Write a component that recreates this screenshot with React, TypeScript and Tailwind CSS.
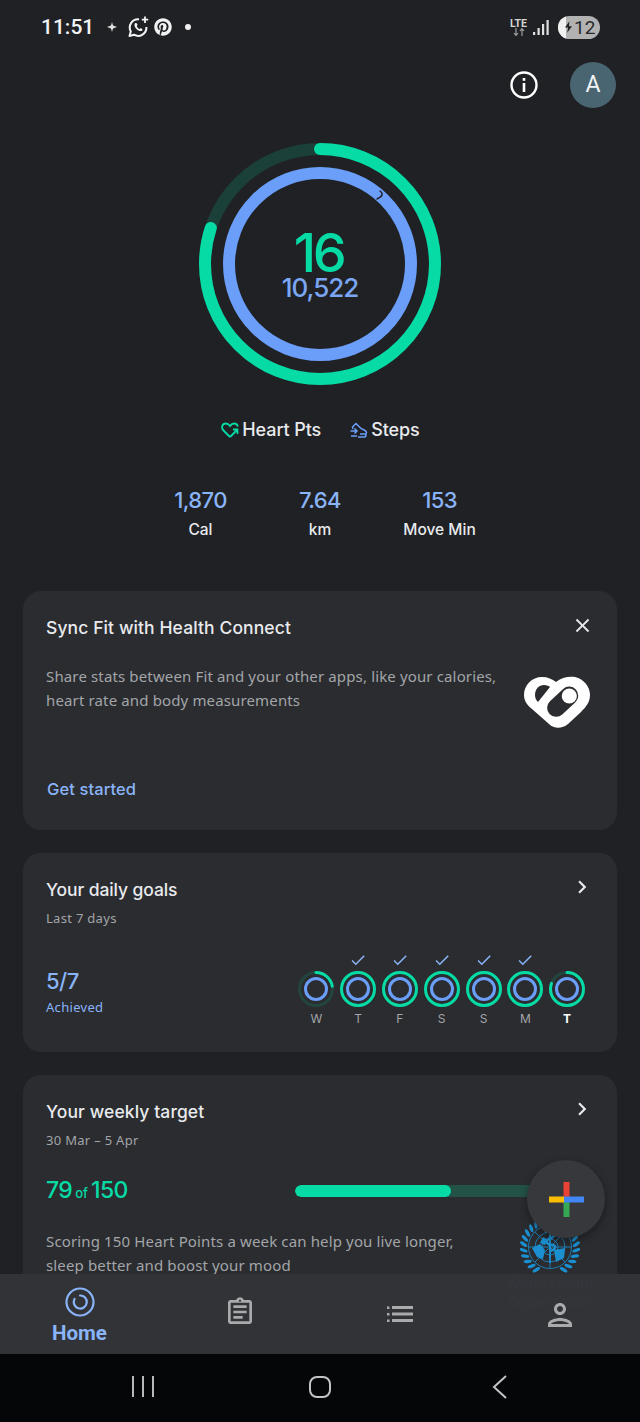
import React from "react";
import { FaPinterest } from "react-icons/fa";
import { MdOutlineAssignment, MdOutlinePerson, MdClose, MdChevronRight, MdCheck } from "react-icons/md";

const GREEN = "#06dba6";
const BLUE = "#6a9ef8";
const UN = "#1b8fd0";

function Ring({ size, ro, ri, so, si, p, track = "#1b3f39", overlap }: { size: number; ro: number; ri: number; so: number; si: number; p: number; track?: string; overlap?: boolean }) {
  const c = size / 2;
  const co = 2 * Math.PI * ro;
  return (
    <svg width={size} height={size} viewBox={`0 0 ${size} ${size}`} className="block">
      <circle cx={c} cy={c} r={ro} fill="none" stroke={track} strokeWidth={so} />
      <circle cx={c} cy={c} r={ro} fill="none" stroke={GREEN} strokeWidth={so} strokeLinecap="round" strokeDasharray={`${co * p} ${co}`} transform={`rotate(-90 ${c} ${c})`} />
      <circle cx={c} cy={c} r={ri} fill="none" stroke={BLUE} strokeWidth={si} />
      {overlap && <path d="M181 48 Q186.500 52 178 56" fill="none" stroke="#202124" strokeWidth="1.500" strokeLinecap="round" />}
    </svg>
  );
}

function Stat({ value, label }: { value: string; label: string }) {
  return (
    <div className="flex w-[119.5px] flex-col items-center">
      <div className="text-[22px] font-medium leading-7 tracking-[-0.6px] text-[#8ab4f8]">{value}</div>
      <div className="mt-[6px] text-[15.5px] font-medium leading-5 text-[#e8eaed]">{label}</div>
    </div>
  );
}

function DayRing({ day, p, done, today }: { day: string; p: number; done?: boolean; today?: boolean }) {
  return (
    <div className="flex w-[41.8px] flex-col items-center">
      <div className="flex h-[20px] items-center justify-center">
        {done && <MdCheck className="text-[18px] text-[#8ab4f8]" />}
      </div>
      <div>
        <Ring size={38} ro={16.5} ri={10.5} so={3} si={3} p={p} track="#24443f" />
      </div>
      <div className={`mt-[2px] text-[12px] leading-[18px] ${today ? "font-bold text-white" : "text-[#a3a5a8]"}`}>{day}</div>
    </div>
  );
}

function HealthConnect() {
  return (
    <svg width="66" height="52" viewBox="0 0 66 52">
      <path d="M32 6 C37 1.500 45 0 51 1 C60 3 66 11 66 19 C66 26 62 31 57 36 L44 48 C38 53 30 53 25 48 L8 33 C2 28 0 24 0 19 C0 9 8 1 18 1 C24 1 28 3 32 6 Z" fill="#fff" />
      <rect x="20.700" y="16.700" width="36" height="18" rx="9" transform="rotate(-43 38.700 25.700)" fill="#2a2c30" />
      <circle cx="45.300" cy="20" r="7.600" fill="#fff" />
      <path d="M11 19 C11 13 15 9 20 9 C23 9 25 10 26 11 L14 26 C12 24 11 22 11 19 Z" fill="#2a2c30" />
    </svg>
  );
}

function Who() {
  const leaves = [];
  for (let i = 0; i < 10; i++) {
    const a = 32 + i * 13;
    leaves.push(<ellipse key={`r${i}`} cx="30" cy="3.500" rx="1.700" ry="4.200" fill={UN} transform={`rotate(${a} 30 30) rotate(-28 30 3.500)`} />);
    leaves.push(<ellipse key={`l${i}`} cx="30" cy="3.500" rx="1.700" ry="4.200" fill={UN} transform={`rotate(${-a} 30 30) rotate(28 30 3.500)`} />);
  }
  return (
    <svg width="60" height="60" viewBox="0 0 60 60">
      {leaves}
      <g fill="none" stroke={UN} strokeWidth="0.800">
        <circle cx="30" cy="30" r="21.500" />
        <circle cx="30" cy="30" r="15" />
        <circle cx="30" cy="30" r="8" />
        <path d="M30 8.500V51.500M8.500 30H51.500M14.800 14.800L45.200 45.200M45.200 14.800L14.800 45.200" />
      </g>
      <path d="M30 9V46" stroke={UN} strokeWidth="1.800" />
      <path d="M25 15C35 11 38 18 31 21C25 23 25 27 33 28C37 29 35 33 30 34" fill="none" stroke={UN} strokeWidth="2.500" />
      <path d="M12 31L20 27L25 33L23 42L17 40ZM23 20L28 23L25 28L20 26ZM34 33L45 31L44 41L36 45Z" fill={UN} />
    </svg>
  );
}

export default function App() {
  const body = { fontFamily: '"Noto Sans", sans-serif' };
  return (
    <div className="flex h-[1422px] w-[640px] flex-col overflow-hidden bg-[#202124] text-white" style={{ fontFamily: 'Inter, "Noto Sans", sans-serif' }}>
      <div className="relative h-[1354px] overflow-hidden">
        {/* status bar */}
        <div className="flex h-[62px] items-start justify-between pl-[41px] pr-[40px] pt-[14px]" style={{ fontFamily: 'Roboto, sans-serif' }}>
          <div className="flex h-[26px] items-center">
            <span className="text-[21px] font-medium leading-[26px] text-[#f1f3f4]">11:51</span>
            <svg width="10" height="10" viewBox="0 0 10 10" className="ml-[13px]"><path d="M5 0L6 3.500L10 5L6 6.500L5 10L4 6.500L0 5L4 3.500Z" fill="#e0e0e0" /><circle cx="5" cy="5" r="1.800" fill="#e0e0e0" /></svg>
            <svg width="22" height="22" viewBox="0 0 22 22" className="ml-[10px]">
              <path d="M12 3.300A8.300 8.300 0 0 0 3.800 15.500L2.500 20L7 18.700A8.300 8.300 0 0 0 19.400 11" fill="none" stroke="#f1f3f4" strokeWidth="2" strokeLinejoin="round" />
              <path d="M7.800 7.500C7 9 7.500 11 9.500 13C11.500 15 13.500 15.500 15 14.700C15.800 14.200 15.500 13 14.500 12.500C13.500 12 13 12.800 12.500 13C11.500 12.800 10 11 9.800 10.200C10 9.500 10.800 9.300 10.300 8C9.800 7 8.500 6.700 7.800 7.500Z" fill="#f1f3f4" />
              <path d="M18 0.500V7M14.800 3.700H21.200" stroke="#f1f3f4" strokeWidth="1.800" />
            </svg>
            <FaPinterest className="ml-[5px] text-[18px] text-[#f1f3f4]" />
            <span className="ml-[13px] h-[6px] w-[6px] rounded-full bg-[#f1f1f1]" />
          </div>
          <div className="flex h-[26px] items-center">
            <div className="flex flex-col items-center text-[10.5px] font-bold leading-[10px] text-[#d5d5d5]">
              <span>LTE</span>
              <svg width="12" height="8" viewBox="0 0 12 8" className="mt-[-1px]"><path d="M3 0V7M1 5L3 7.500L5 5M9 8V1M7 3L9 0.500L11 3" fill="none" stroke="#9c9c9c" strokeWidth="1.200" /></svg>
            </div>
            <svg width="16" height="16" viewBox="0 0 16 16" className="ml-[6px]"><rect x="0" y="13" width="2.200" height="3" fill="#e0e0e0" /><rect x="4.500" y="9" width="2.200" height="7" fill="#e0e0e0" /><rect x="9" y="5" width="2.200" height="11" fill="#e0e0e0" /><rect x="13.500" y="1" width="2.200" height="15" fill="#e0e0e0" /></svg>
            <div className="ml-[9px] flex h-[23px] w-[42px] items-center overflow-hidden rounded-full bg-[#b2b2b2]">
              <div className="h-full w-[8px] shrink-0 rounded-l-full bg-[#f0f0f0]" />
              <svg width="7" height="12" viewBox="0 0 8 13" className="ml-[-1px] mr-[2px] shrink-0"><path d="M5 0L0 7H3.500L2.500 13L8 5.500H4.500Z" fill="#202124" /></svg>
              <span className="text-[19px] leading-[23px] text-[#26282b]">12</span>
            </div>
          </div>
        </div>

        {/* header */}
        <div className="flex h-[46px] items-center justify-end pr-[24px]">
          <svg width="30" height="30" viewBox="0 0 30 30" className="mr-[31px]">
            <circle cx="15" cy="15" r="12.500" fill="none" stroke="#fff" strokeWidth="2.400" />
            <rect x="13.700" y="13" width="2.600" height="9" fill="#fff" />
            <rect x="13.700" y="8" width="2.600" height="2.800" fill="#fff" />
          </svg>
          <div className="flex h-[46px] w-[46px] items-center justify-center rounded-full bg-[#4a6572] text-[23px] text-[#f1f3f4]" style={{ fontFamily: 'Roboto, sans-serif' }}>A</div>
        </div>

        {/* rings */}
        <div className="mt-[35px] grid justify-center">
          <div className="col-start-1 row-start-1">
            <Ring size={242} ro={115} ri={91} so={12} si={12} p={0.8} overlap />
          </div>
          <div className="col-start-1 row-start-1 flex flex-col items-center justify-center pt-[5px]">
            <div className="pr-[3px] text-[54px] font-medium leading-[44px] tracking-[-3.5px] text-[#06dba6]">16</div>
            <div className="mt-[-1px] text-[26px] font-medium leading-[28px] tracking-[-1px] text-[#7aa6f4]">10,522</div>
          </div>
        </div>

        {/* legend */}
        <div className="mt-[33px] flex h-[24px] items-center justify-center pl-[1px]">
          <svg width="18" height="16" viewBox="0 0 18 16" className="mr-[3px]">
            <path d="M9 15L2.500 8.500C0 6 1 1.500 4.800 1.500C6.800 1.500 8 2.500 9 4C10 2.500 11.200 1.500 13.200 1.500C15 1.500 16.500 3 16.800 4.500" fill="none" stroke={GREEN} strokeWidth="1.800" />
            <path d="M9 15L16 8M12 7.500H16.500V12" fill="none" stroke={GREEN} strokeWidth="1.800" />
          </svg>
          <span className="text-[18px] font-medium leading-6 tracking-[-0.1px] text-[#e8eaed]">Heart Pts</span>
          <svg width="18" height="17" viewBox="0 0 18 17" className="ml-[29px] mr-[3px]">
            <path d="M3 7L2.500 5L6 1.500L9.500 5L11 6.500L15 8.500C17 9.500 17 12 15 12M8 15H14C16 15 17 13 15 12H10" fill="none" stroke={BLUE} strokeWidth="1.500" />
            <path d="M0.500 9H7M4.500 6.500L7 9L4.500 11.500M1 14H7" fill="none" stroke={BLUE} strokeWidth="1.500" />
          </svg>
          <span className="text-[18px] font-medium leading-6 tracking-[-0.1px] text-[#e8eaed]">Steps</span>
        </div>

        {/* stats */}
        <div className="mt-[44px] flex justify-center">
          <Stat value="1,870" label="Cal" />
          <Stat value="7.64" label="km" />
          <Stat value="153" label="Move Min" />
        </div>

        <div className="mx-[23px] mt-[51px] flex flex-col gap-[23px]">
          {/* card 1 */}
          <section className="h-[239px] rounded-[18px] bg-[#2a2c30] pl-[23px] pr-[23px] pt-[25px]">
            <div className="flex items-start justify-between">
              <h2 className="text-[17.5px] font-medium leading-6 tracking-[0.1px] text-[#e8eaed]">Sync Fit with Health Connect</h2>
              <MdClose className="mr-[0px] mt-[-2px] text-[23px] text-[#e8eaed]" />
            </div>
            <div className="mt-[24px] flex items-start justify-between">
              <p className="w-[470px] text-[15px] leading-6 tracking-[0.14px] text-[#a3a5a8]" style={body}>
                Share stats between Fit and your other apps, like your calories, heart rate and body measurements
              </p>
              <div className="mr-[4px] mt-[12px]"><HealthConnect /></div>
            </div>
            <div className="ml-[1px] mt-[49px] text-[16.5px] font-medium leading-6 tracking-[0.1px] text-[#8ab4f8]">Get started</div>
          </section>

          {/* card 2 */}
          <section className="h-[199px] rounded-[18px] bg-[#2a2c30] pl-[23px] pr-[23px] pt-[25px]">
            <div className="flex items-start justify-between">
              <h2 className="text-[17.5px] font-medium leading-6 tracking-[-0.1px] text-[#e8eaed]">Your daily goals</h2>
              <MdChevronRight className="mr-[-1px] mt-[-4px] text-[26px] text-[#e8eaed]" />
            </div>
            <div className="mt-[7px] text-[13px] leading-[18px] tracking-[0.3px] text-[#a3a5a8]" style={body}>Last 7 days</div>
            <div className="flex items-start justify-between">
              <div className="mt-[40px]">
                <div className="text-[22px] font-medium leading-7 tracking-[-0.5px] text-[#8ab4f8]">5/7</div>
                <div className="mt-[3px] text-[13px] leading-[18px] tracking-[0.3px] text-[#8ab4f8]" style={body}>Achieved</div>
              </div>
              <div className="mr-[6px] mt-[23px] flex">
                <DayRing day="W" p={0.22} />
                <DayRing day="T" p={1} done />
                <DayRing day="F" p={1} done />
                <DayRing day="S" p={1} done />
                <DayRing day="S" p={1} done />
                <DayRing day="M" p={1} done />
                <DayRing day="T" p={0.8} today />
              </div>
            </div>
          </section>

          {/* card 3 */}
          <section className="h-[300px] rounded-[18px] bg-[#2a2c30] pl-[23px] pr-[23px] pt-[25px]">
            <div className="flex items-start justify-between">
              <h2 className="text-[17.5px] font-medium leading-6 tracking-[0.1px] text-[#e8eaed]">Your weekly target</h2>
              <MdChevronRight className="mr-[-1px] mt-[-4px] text-[26px] text-[#e8eaed]" />
            </div>
            <div className="mt-[7px] text-[13px] leading-[18px] tracking-[0.3px] text-[#a3a5a8]" style={body}>30 Mar – 5 Apr</div>
            <div className="mt-[28px] flex h-[28px] items-center">
              <div className="w-[249px] text-[#06dba6]">
                <span className="text-[23px] font-medium leading-7 tracking-[-0.6px]">79</span>
                <span className="mx-[3px] text-[13px] font-medium leading-7">of</span>
                <span className="text-[23px] font-medium leading-7 tracking-[-0.6px]">150</span>
              </div>
              <div className="h-[12px] w-[250px] overflow-hidden rounded-full bg-[#235247]">
                <div className="h-full w-[156px] rounded-full bg-[#06dba6]" />
              </div>
            </div>
            <div className="mt-[24px] flex items-start justify-between">
              <p className="w-[430px] text-[15px] leading-6 tracking-[0.14px] text-[#a3a5a8]" style={body}>
                Scoring 150 Heart Points a week can help you live longer, sleep better and boost your mood
              </p>
              <div className="mr-[14px] mt-[-12px] flex w-[60px] flex-col items-center">
                <Who />
                <div className="mt-[-2px] w-[100px] text-center text-[14px] leading-[18px] text-[#2f8fd0]">World Health Organization</div>
              </div>
            </div>
          </section>
        </div>

        {/* FAB */}
        <div className="absolute left-[527px] top-[1160px] flex h-[78px] w-[78px] items-center justify-center rounded-full bg-[#37383b] shadow-[0_3px_8px_rgba(0,0,0,0.4)]">
          <svg width="35" height="35" viewBox="0 0 35 35">
            <rect x="14.500" y="0" width="6" height="17.500" fill="#ea4335" />
            <rect x="14.500" y="17.500" width="6" height="17.500" fill="#34a853" />
            <rect x="0" y="14.500" width="15" height="6" fill="#fbbc04" />
            <rect x="15" y="14.500" width="20" height="6" fill="#4285f4" />
          </svg>
        </div>

        {/* bottom nav */}
        <nav className="absolute bottom-0 left-0 right-0 flex h-[80px] bg-[#333438]/[0.97]">
          <div className="flex w-[159px] flex-col items-center pt-[13px]" style={{ fontFamily: 'Roboto, sans-serif' }}>
            <svg width="30" height="30" viewBox="0 0 30 30">
              <circle cx="15" cy="15" r="13.500" fill="none" stroke="#8ab4f8" strokeWidth="2.200" />
              <path d="M15 8.500A6.500 6.500 0 1 1 9.500 12" fill="none" stroke="#8ab4f8" strokeWidth="2.200" strokeLinecap="round" />
            </svg>
            <span className="mt-[4px] text-[20.5px] font-bold leading-6 text-[#8ab4f8]">Home</span>
          </div>
          <div className="flex w-[162px] justify-center pt-[22px]"><MdOutlineAssignment className="text-[32px] text-[#a9aaac]" /></div>
          <div className="flex w-[158px] justify-center pt-[32px]">
            <svg width="26" height="17" viewBox="0 0 26 17">
              <g fill="#a9aaac">
                <rect x="0" y="0.500" width="2.500" height="2.500" /><rect x="0" y="7" width="2.500" height="2.500" /><rect x="0" y="13.500" width="2.500" height="2.500" />
                <rect x="5" y="0" width="21" height="3" /><rect x="5" y="6.500" width="21" height="3" /><rect x="5" y="13" width="21" height="3" />
              </g>
            </svg>
          </div>
          <div className="flex w-[161px] justify-center pt-[23px]"><MdOutlinePerson className="text-[36px] text-[#a9aaac]" /></div>
        </nav>
      </div>

      {/* system nav */}
      <div className="flex h-[68px] items-center bg-[#050607] pb-[3px]">
        <div className="flex w-[284px] justify-center gap-[8px] pl-[1px]">
          <span className="h-[21px] w-[2px] bg-[#b8b8b8]" />
          <span className="h-[21px] w-[2px] bg-[#b8b8b8]" />
          <span className="h-[21px] w-[2px] bg-[#b8b8b8]" />
        </div>
        <div className="ml-[25px] h-[22px] w-[22px] rounded-[8px] border-2 border-[#c4c4c4]" />
        <svg width="16" height="24" viewBox="0 0 16 24" className="ml-[161px]"><path d="M14 1L2 12L14 23" fill="none" stroke="#c4c4c4" strokeWidth="2" /></svg>
      </div>
    </div>
  );
}
